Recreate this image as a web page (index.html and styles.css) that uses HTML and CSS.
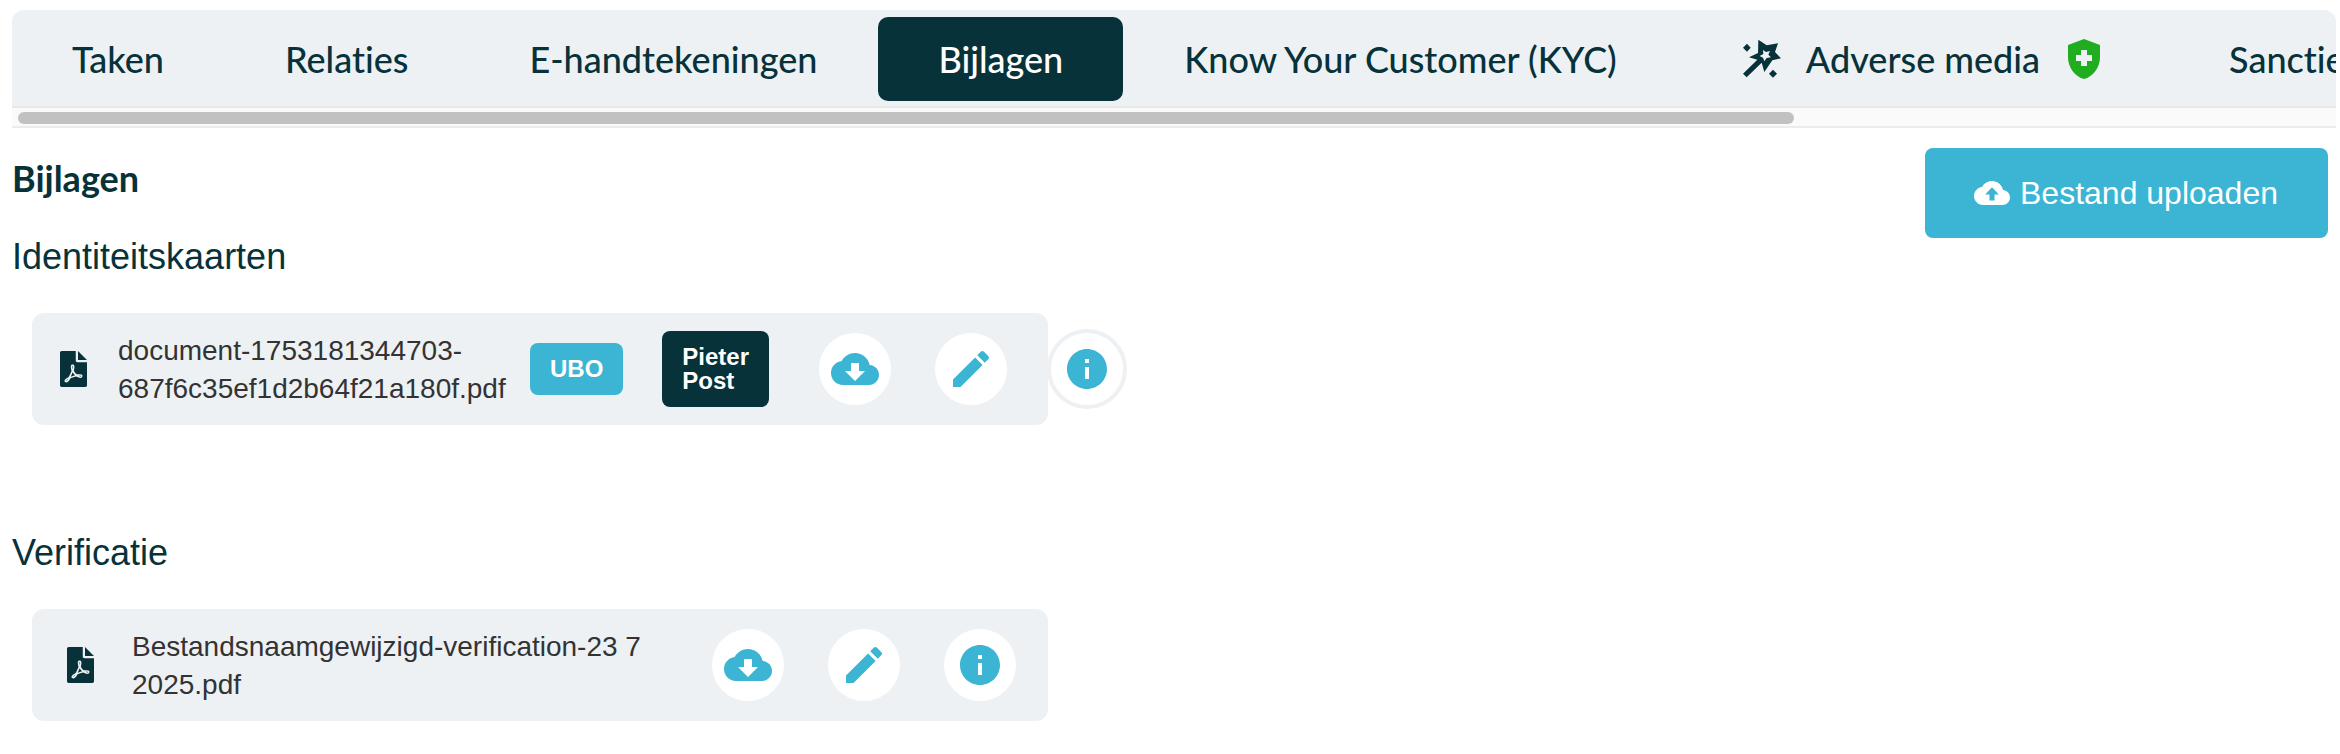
FILE: index.html
```html
<!DOCTYPE html>
<html lang="nl">
<head>
<meta charset="utf-8">
<title>Bijlagen</title>
<link rel="stylesheet" href="styles.css">
</head>
<body>
<svg class="sprite" aria-hidden="true">
  <symbol id="i-pdf" viewBox="0 0 384 512"><path d="M181.900 256.100c-5-16-4.900-46.900-2-46.900 8.400 0 7.600 36.900 2 46.900zm-1.700 47.200c-7.700 20.200-17.300 43.300-28.400 62.700 18.300-7 39-17.200 62.900-21.900-12.700-9.600-24.900-23.400-34.500-40.800zM86.100 428.100c0 .8 13.200-5.400 34.900-40.200-6.700 6.300-29.100 24.500-34.900 40.200zM248 160h136v328c0 13.300-10.700 24-24 24H24c-13.300 0-24-10.700-24-24V24C0 10.700 10.700 0 24 0h200v136c0 13.200 10.800 24 24 24zm-8 171.800c-20-12.200-33.300-29-42.700-53.800 4.500-18.500 11.600-46.600 6.200-64.200-4.700-29.400-42.400-26.500-47.800-6.800-5 18.300-.4 44.100 8.100 77-11.600 27.600-28.700 64.600-40.800 85.800-.1 0-.1.1-.2.1-27.100 13.900-73.600 44.500-54.500 68 5.600 6.900 16 10 21.500 10 17.900 0 35.700-18 61.100-61.800 25.800-8.500 54.100-19.100 79-23.200 21.700 11.800 47.100 19.500 64 19.500 29.200 0 31.200-32 19.700-43.400-13.900-13.600-54.300-9.700-73.600-7.200zM384 128L256 0v128zM302.900 360.300c4.100-2.700-2.500-11.900-42.800-9 37.100 15.800 42.800 9 42.800 9z"/></symbol>
  <symbol id="i-download" viewBox="0 0 24 24"><path d="M19.350 10.040C18.670 6.590 15.640 4 12 4 9.110 4 6.600 5.640 5.350 8.040 2.340 8.360 0 10.910 0 14c0 3.310 2.690 6 6 6h13c2.760 0 5-2.240 5-5 0-2.640-2.050-4.780-4.650-4.960zM17 13l-5 5-5-5h3V9h4v4h3z"/></symbol>
  <symbol id="i-upload" viewBox="0 0 24 24"><path d="M19.350 10.040C18.670 6.590 15.640 4 12 4 9.110 4 6.600 5.640 5.350 8.040 2.340 8.360 0 10.910 0 14c0 3.310 2.690 6 6 6h13c2.760 0 5-2.240 5-5 0-2.640-2.050-4.780-4.650-4.960zM13.700 13v4h-3.400v-4H7.400L12 8.200l4.600 4.800z"/></symbol>
  <symbol id="i-edit" viewBox="0 0 24 24"><path d="M3 17.250V21h3.750L17.810 9.940l-3.750-3.750L3 17.250zM20.710 7.040c.39-.39.39-1.020 0-1.410l-2.340-2.340c-.39-.39-1.020-.39-1.410 0l-1.830 1.830 3.750 3.750 1.830-1.830z"/></symbol>
  <symbol id="i-info" viewBox="0 0 24 24"><path d="M12 2C6.480 2 2 6.480 2 12s4.480 10 10 10 10-4.480 10-10S17.520 2 12 2zm1 15h-2v-6h2v6zm0-8h-2V7h2v2z"/></symbol>
  <symbol id="i-shield" viewBox="0 0 24 24"><path d="M12 2L4 5v6.090c0 5.050 3.410 9.760 8 10.910 4.590-1.150 8-5.860 8-10.910V5l-8-3zm4 11h-2.500v2.500h-3V13H8v-3h2.500V7.500h3V10H16v3z"/></symbol>
  <symbol id="i-wand" viewBox="18 12 144 144"><path fill-rule="evenodd" d="M79 26L104 43L138 37L129 63L147 82L121 88L97 123L89 95L44 139L33 128L76 86L51 79L78 66ZM93 57L94 69L83 75L93 80L97 91L104 81L117 79L109 71L114 60L102 63ZM45 38L56 50L45 62L33 50ZM123 116L135 128L123 140L111 128Z"/></symbol>
</svg>

<nav class="tabs" aria-label="Dossier">
  <div class="tab-list">
    <button class="tab" type="button">Taken</button>
    <button class="tab" type="button">Relaties</button>
    <button class="tab" type="button">E-handtekeningen</button>
    <button class="tab tab-active" type="button" aria-current="page">Bijlagen</button>
    <button class="tab" type="button">Know Your Customer (KYC)</button>
    <button class="tab" type="button"><svg class="icon"><use href="#i-wand"/></svg>Adverse media<svg class="icon icon-green"><use href="#i-shield"/></svg></button>
    <button class="tab" type="button">Sancties</button>
  </div>
  <div class="scroll-track"><div class="scroll-thumb"></div></div>
</nav>

<main class="page">
  <div class="files">
    <h2 class="title">Bijlagen</h2>
    <section class="group">
      <h3 class="group-title">Identiteitskaarten</h3>
      <div class="file file-tagged">
        <svg class="icon-pdf"><use href="#i-pdf"/></svg>
        <span class="name">document-1753181344703-<wbr>687f6c35ef1d2b64f21a180f.pdf</span>
        <span class="tags"><span class="tag">UBO</span><span class="tag tag-dark">Pieter<br>Post</span></span>
        <div class="actions">
          <button class="action" type="button" aria-label="Downloaden"><svg class="icon"><use href="#i-download"/></svg></button>
          <button class="action" type="button" aria-label="Bewerken"><svg class="icon"><use href="#i-edit"/></svg></button>
          <button class="action" type="button" aria-label="Informatie"><svg class="icon"><use href="#i-info"/></svg></button>
        </div>
      </div>
    </section>
    <section class="group">
      <h3 class="group-title">Verificatie</h3>
      <div class="file">
        <svg class="icon-pdf"><use href="#i-pdf"/></svg>
        <span class="name">Bestandsnaamgewijzigd-verification-23 7 2025.pdf</span>
        <div class="actions">
          <button class="action" type="button" aria-label="Downloaden"><svg class="icon"><use href="#i-download"/></svg></button>
          <button class="action" type="button" aria-label="Bewerken"><svg class="icon"><use href="#i-edit"/></svg></button>
          <button class="action" type="button" aria-label="Informatie"><svg class="icon"><use href="#i-info"/></svg></button>
        </div>
      </div>
    </section>
  </div>
  <button class="upload" type="button"><svg class="icon-upload"><use href="#i-upload"/></svg>Bestand uploaden</button>
</main>
</body>
</html>
```
FILE: styles.css
```css
:root {
  --ink: #07323a;
  --blue: #3bb5d3;
  --panel: #edf1f4;
}

* {
  box-sizing: border-box;
}

body {
  margin: 0;
  padding: 10px 0 0 12px;
  background: #fff;
  color: var(--ink);
  font-family: "Liberation Sans", Arial, sans-serif;
}

button {
  border: 0;
  font: inherit;
  color: inherit;
  cursor: pointer;
}

svg {
  flex: none;
  fill: currentColor;
}

.sprite {
  display: none;
}

.icon {
  width: 48px;
  height: 48px;
}

.icon-green {
  color: #20ad20;
}

.tabs {
  margin-right: 4px;
  border-radius: 12px 12px 0 0;
  overflow: hidden;
}

.tab-list {
  display: flex;
  gap: 1px;
  padding: 7px 0 5px;
  background: var(--panel);
  overflow: hidden;
}

.tab {
  display: flex;
  flex: none;
  align-items: center;
  gap: 20px;
  height: 84px;
  padding: 0 60px;
  border-radius: 10px;
  background: none;
  font: 500 36px/44px Lato, sans-serif;
  font-variant-ligatures: none;
  white-space: nowrap;
}

.tab-active {
  background: var(--ink);
  color: #fff;
}

.scroll-track {
  padding: 4px 6px 2px;
  border-top: 2px solid #e6e8e9;
  border-bottom: 2px solid #ececec;
  background: #fafafa;
}

.scroll-thumb {
  width: 76.8%;
  height: 12px;
  border-radius: 6px;
  background: #c1c1c1;
}

.page {
  display: flex;
  align-items: flex-start;
  padding-right: 12px;
}

.files {
  flex: 1;
  padding-top: 28px;
}

.title {
  margin: 0 0 35px;
  font: bold 36px/44px Lato, sans-serif;
}

.group {
  margin-bottom: 106px;
}

.group:last-child {
  margin-bottom: 0;
}

.group-title {
  margin: 0 0 34px;
  font-size: 36px;
  font-weight: normal;
  line-height: 44px;
}

.file {
  display: flex;
  align-items: center;
  width: 53.1%;
  height: 112px;
  margin-left: 20px;
  padding: 0 28px 0 35px;
  border-radius: 12px;
  background: var(--panel);
}

.icon-pdf {
  width: 27px;
  height: 36px;
}

.name {
  flex: 1;
  margin: 0 20px 0 38px;
  padding-top: 2px;
  color: #333;
  font-size: 28px;
  line-height: 38px;
}

.file-tagged {
  padding-left: 28px;
}

.file-tagged .name {
  flex: 0 0 388px;
  margin: 0 24px 0 31px;
}

.tags {
  display: flex;
  flex: none;
  align-items: center;
  gap: 39px;
  margin-right: 46px;
}

.tag {
  padding: 14px 20px;
  border-radius: 8px;
  background: var(--blue);
  color: #fff;
  font-size: 24px;
  font-weight: bold;
  line-height: 24px;
}

.tag-dark {
  background: var(--ink);
}

.actions {
  display: flex;
  flex: none;
  gap: 36px;
}

.action {
  display: flex;
  align-items: center;
  justify-content: center;
  width: 80px;
  height: 80px;
  padding: 0;
  border: 4px solid var(--panel);
  border-radius: 50%;
  background: #fff;
  color: var(--blue);
}

.upload {
  display: flex;
  align-items: center;
  gap: 10px;
  height: 90px;
  margin-top: 20px;
  padding: 0 50px 0 49px;
  border-radius: 8px;
  background: var(--blue);
  color: #fff;
  font-size: 32px;
  white-space: nowrap;
}

.icon-upload {
  width: 36px;
  height: 36px;
}
```
